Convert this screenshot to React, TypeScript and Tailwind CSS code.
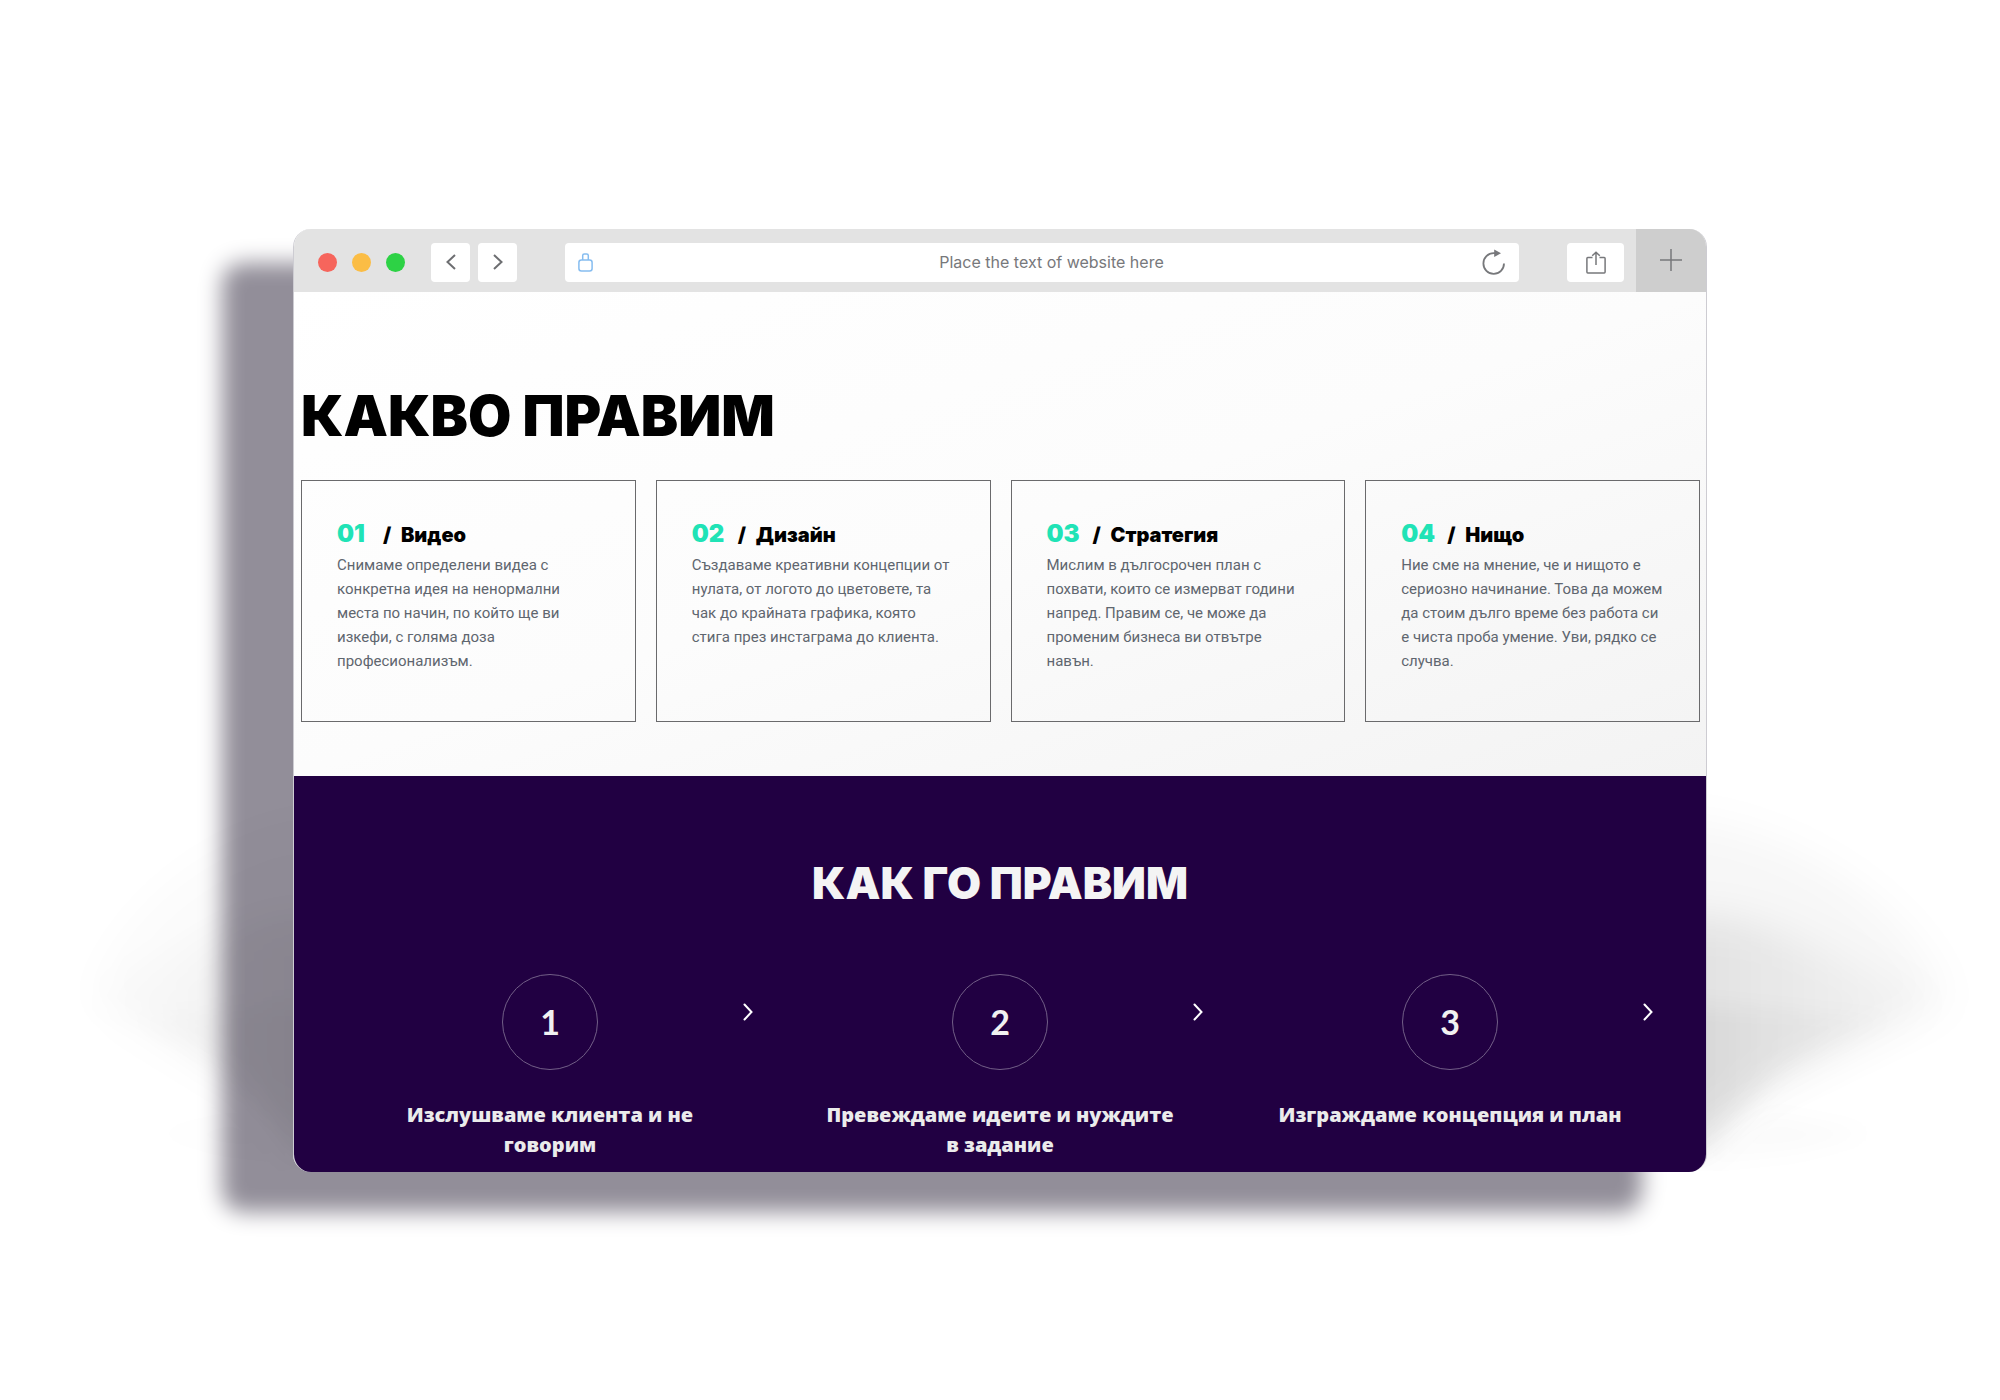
const services = [
  {
    number: "01",
    title: "Видео",
    text: "Снимаме определени видеа с конкретна идея на ненормални места по начин, по който ще ви изкефи, с голяма доза професионализъм.",
  },
  {
    number: "02",
    title: "Дизайн",
    text: "Създаваме креативни концепции от нулата, от логото до цветовете, та чак до крайната графика, която стига през инстаграма до клиента.",
  },
  {
    number: "03",
    title: "Стратегия",
    text: "Мислим в дългосрочен план с похвати, които се измерват години напред. Правим се, че може да променим бизнеса ви отвътре навън.",
  },
  {
    number: "04",
    title: "Нищо",
    text: "Ние сме на мнение, че и нищото е сериозно начинание. Това да можем да стоим дълго време без работа си е чиста проба умение. Уви, рядко се случва.",
  },
];

const steps = [
  "Изслушваме клиента и не говорим",
  "Превеждаме идеите и нуждите в задание",
  "Изграждаме концепция и план",
];

const navButton =
  "flex h-[39px] w-[39px] items-center justify-center rounded bg-white text-[#6d6e71]";

/** Soft light falling on the surface to both sides of the window. */
function AmbientShade() {
  return (
    <svg
      aria-hidden="true"
      viewBox="0 0 1414 944"
      preserveAspectRatio="none"
      className="pointer-events-none absolute inset-0 h-full w-full overflow-visible"
    >
      <defs>
        <linearGradient id="shade-near" gradientUnits="userSpaceOnUse" x1="1400" y1="0" x2="1670" y2="0">
          <stop offset="0" stopColor="#1c1c28" stopOpacity="0.09" />
          <stop offset="0.5" stopColor="#1c1c1c" stopOpacity="0.04" />
          <stop offset="1" stopColor="#1c1c1c" stopOpacity="0.01" />
        </linearGradient>
        <filter id="shade-soft" x="-20%" y="-20%" width="140%" height="140%">
          <feGaussianBlur stdDeviation="20" />
        </filter>
        <filter id="shade-tight" x="-20%" y="-20%" width="140%" height="140%">
          <feGaussianBlur stdDeviation="10" />
        </filter>
        <clipPath id="shade-floor">
          <rect x="1000" y="0" width="800" height="943" />
        </clipPath>
        <g id="shade-side" clipPath="url(#shade-floor)">
          <path
            d="M1380 590C1510 600 1630 690 1655 775L1430 885L1380 930Z"
            fill="#000"
            fillOpacity="0.03"
            filter="url(#shade-soft)"
          />
          <path
            d="M1380 690C1480 680 1560 740 1645 775L1470 855L1400 920H1380Z"
            fill="url(#shade-near)"
            filter="url(#shade-soft)"
          />
          <path
            d="M1390 775L1600 790L1490 840L1412 925H1390Z"
            fill="url(#shade-near)"
            fillOpacity="0.5"
            filter="url(#shade-tight)"
          />
          <path
            d="M1400 935L1480 885L1580 905L1500 925Z"
            fill="#000"
            fillOpacity="0.015"
            filter="url(#shade-tight)"
          />
        </g>
      </defs>
      <use href="#shade-side" />
      <use href="#shade-side" transform="translate(1200 0) scale(-0.85 1)" opacity="0.55" />
    </svg>
  );
}

function Toolbar() {
  return (
    <header className="flex h-[63px] items-center bg-[#e3e3e3]">
      <div className="flex flex-1 items-center pt-1 pl-6">
        <div className="flex gap-[15px]">
          <span className="h-[19px] w-[19px] rounded-full bg-[#f6655c]" />
          <span className="h-[19px] w-[19px] rounded-full bg-[#fbbd45]" />
          <span className="h-[19px] w-[19px] rounded-full bg-[#2dd245]" />
        </div>
        <nav className="ml-[26px] flex gap-2">
          <button type="button" aria-label="Back" className={navButton}>
            <svg width="10" height="16" viewBox="0 0 10 16" fill="none" stroke="currentColor" strokeWidth="2">
              <path d="M9 1L1.5 8L9 15" />
            </svg>
          </button>
          <button type="button" aria-label="Forward" className={navButton}>
            <svg width="10" height="16" viewBox="0 0 10 16" fill="none" stroke="currentColor" strokeWidth="2">
              <path d="M1 1L8.500 8L1 15" />
            </svg>
          </button>
        </nav>
        <div className="mx-12 flex h-[39px] flex-1 items-center rounded bg-white px-[13px]">
          <svg width="15" height="19" viewBox="0 0 15 19" fill="none" stroke="#86bdf0" strokeWidth="1.5">
            <rect x="0.9" y="6.900" width="13.200" height="11" rx="2.500" />
            <path d="M4.700 6.900V2.500Q4.700 0.900 6.300 0.900H8.700Q10.300 0.900 10.300 2.500V6.900" />
          </svg>
          <input
            type="text"
            aria-label="Address"
            defaultValue="Place the text of website here"
            className="min-w-0 flex-1 bg-transparent pl-7 text-center font-['Inter',sans-serif] text-base text-[#77787b] outline-none"
          />
          <button type="button" aria-label="Reload" className="text-[#77787b]">
            <svg width="24" height="26" viewBox="0 0 24 26" fill="none">
              <path d="M22 14.500A10.300 10.300 0 1 1 11.700 4.200H14" stroke="currentColor" strokeWidth="1.8" />
              <path d="M12.200 0.500L19 4.300L12.200 8Z" fill="currentColor" />
            </svg>
          </button>
        </div>
        <button
          type="button"
          aria-label="Share"
          className="mr-3 flex h-[39px] w-[57px] items-center justify-center rounded bg-white text-[#77787b]"
        >
          <svg width="20" height="23" viewBox="0 0 20 23" fill="none" stroke="currentColor" strokeWidth="1.5">
            <path d="M6.500 6.500H1.800Q0.900 6.500 0.900 7.400V21Q0.900 21.900 1.800 21.900H18.200Q19.100 21.900 19.100 21V7.400Q19.100 6.500 18.200 6.500H13.500" />
            <path d="M10 14V1.500M6.200 4.800L10 1.200L13.800 4.800" />
          </svg>
        </button>
      </div>
      <button
        type="button"
        aria-label="New tab"
        className="flex w-[70px] items-center justify-center self-stretch bg-[#cecece] text-[#77787b]"
      >
        <svg width="22" height="22" viewBox="0 0 22 22" stroke="currentColor" strokeWidth="1.5">
          <path d="M11 0V22M0 11H22" />
        </svg>
      </button>
    </header>
  );
}

function Services() {
  return (
    <section className="bg-linear-to-br from-white via-[#fcfcfc] to-[#f3f3f3] pt-24 pr-1.5 pb-[54px] pl-[7px]">
      <h1 className="font-['Inter',sans-serif] text-[56px] leading-[56px] font-black text-black">
        КАКВО ПРАВИМ
      </h1>
      <div className="mt-9 grid grid-cols-4 gap-5">
        {services.map((service) => (
          <article key={service.number} className="border border-[#6a6a6c] px-[35px] pt-[39px] pb-12">
            <h2 className="mb-1 flex items-baseline font-['Inter',sans-serif] text-xl leading-7 font-black text-black">
              <span className="w-[46px] text-2xl leading-7 text-[#20e3b6]">{service.number}</span>
              <span className="w-[18px]">/</span>
              {service.title}
            </h2>
            <p className="font-['Roboto',sans-serif] text-[15px] leading-6 text-[#5f666f]">{service.text}</p>
          </article>
        ))}
      </div>
    </section>
  );
}

function Process() {
  return (
    <section className="bg-[#210042] px-[31px] pt-[83px] pb-3">
      <h2 className="text-center font-['Inter',sans-serif] text-[44px] leading-[48px] font-black text-[#f4f4f4]">
        КАК ГО ПРАВИМ
      </h2>
      <ol className="mt-[67px] grid grid-cols-3">
        {steps.map((step, index) => (
          <li key={step}>
            <div className="grid grid-cols-[1fr_auto_1fr]">
              <span className="col-start-2 flex h-24 w-24 items-center justify-center rounded-full border border-[#725f87] font-['Lato',sans-serif] text-[34px] font-bold text-[#f1f1f1]">
                {index + 1}
              </span>
              <svg
                aria-hidden="true"
                width="10"
                height="18"
                viewBox="0 0 10 18"
                fill="none"
                stroke="#fff"
                strokeWidth="2"
                strokeLinecap="round"
                className="mt-[29px] mr-[22px] justify-self-end"
              >
                <path d="M1.500 1.500L8.500 9L1.500 16.500" />
              </svg>
            </div>
            <p className="mt-[30px] px-[50px] text-center font-['Open_Sans',sans-serif] text-xl leading-[30px] font-extrabold text-[#ebebeb]">
              {step}
            </p>
          </li>
        ))}
      </ol>
    </section>
  );
}

export default function App() {
  return (
    <main className="flex min-h-screen items-center justify-center overflow-hidden bg-white">
      <div className="relative w-[70.7%] rounded-[18px] shadow-[-68px_37px_22px_3px_#928e99]">
        <AmbientShade />
        <div className="relative overflow-hidden rounded-[18px] border-x border-[#cdccd2]">
          <Toolbar />
          <Services />
          <Process />
        </div>
      </div>
    </main>
  );
}
